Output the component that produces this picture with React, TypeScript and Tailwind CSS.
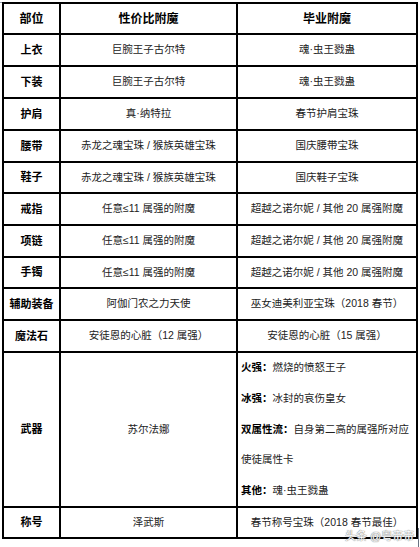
import type { ReactNode } from "react";

const font = { fontFamily: '"Liberation Sans", "Noto Sans CJK SC", sans-serif' };

type Row = { part: string; value: string; best: string; h: string };

const rows: Row[] = [
  { part: "上衣", value: "巨腕王子古尔特", best: "魂·虫王戮蛊", h: "h-[30px]" },
  { part: "下装", value: "巨腕王子古尔特", best: "魂·虫王戮蛊", h: "h-[30px]" },
  { part: "护肩", value: "真·纳特拉", best: "春节护肩宝珠", h: "h-[30px]" },
  { part: "腰带", value: "赤龙之魂宝珠 / 猴族英雄宝珠", best: "国庆腰带宝珠", h: "h-[30px]" },
  { part: "鞋子", value: "赤龙之魂宝珠 / 猴族英雄宝珠", best: "国庆鞋子宝珠", h: "h-[29px]" },
  { part: "戒指", value: "任意≤11 属强的附魔", best: "超越之诺尔妮 / 其他 20 属强附魔", h: "h-[30px]" },
  { part: "项链", value: "任意≤11 属强的附魔", best: "超越之诺尔妮 / 其他 20 属强附魔", h: "h-[30px]" },
  { part: "手镯", value: "任意≤11 属强的附魔", best: "超越之诺尔妮 / 其他 20 属强附魔", h: "h-[29px]" },
  { part: "辅助装备", value: "阿伽门农之力天使", best: "巫女迪美利亚宝珠（2018 春节）", h: "h-[30px]" },
  { part: "魔法石", value: "安徒恩的心脏（12 属强）", best: "安徒恩的心脏（15 属强）", h: "h-[30px]" },
];

function Cell({ children, className = "" }: { children: ReactNode; className?: string }) {
  return (
    <div className={`flex items-center justify-center bg-white whitespace-nowrap ${className}`}>
      {children}
    </div>
  );
}

function WeaponLine({ label, text }: { label?: string; text: string }) {
  return (
    <div className="h-[31px] flex items-center whitespace-nowrap">
      {label && <span className="font-bold text-black">{label}：</span>}
      <span>{text}</span>
    </div>
  );
}

export default function App() {
  return (
    <div className="relative w-[420px] h-[547px] bg-white" style={font}>
      <div className="absolute left-0 top-0 w-[2px] h-[1px] bg-gray-400" />
      <div className="ml-[2px] mt-[2px] w-[416px] bg-black p-[2px] grid grid-cols-[55px_175px_178px] gap-[2px] text-[10.5px] text-[#222]">
        <Cell className="h-[29px] bg-[#fff2cc] font-bold text-[12px] text-black">部位</Cell>
        <Cell className="h-[29px] bg-[#fff2cc] font-bold text-[12px] text-black">性价比附魔</Cell>
        <Cell className="h-[29px] bg-[#fff2cc] font-bold text-[12px] text-black">毕业附魔</Cell>

        {rows.map((r) => (
          <div key={r.part} className="contents">
            <Cell className={`${r.h} font-bold text-[11px] text-black`}>{r.part}</Cell>
            <Cell className={r.h}>{r.value}</Cell>
            <Cell className={r.h}>{r.best}</Cell>
          </div>
        ))}

        <Cell className="h-[153px] font-bold text-[11px] text-black">武器</Cell>
        <Cell className="h-[153px]">苏尔法娜</Cell>
        <div className="h-[153px] bg-white flex flex-col justify-center pl-[3px]">
          <WeaponLine label="火强" text="燃烧的愤怒王子" />
          <WeaponLine label="冰强" text="冰封的哀伤皇女" />
          <WeaponLine label="双属性流" text="自身第二高的属强所对应" />
          <WeaponLine text="使徒属性卡" />
          <WeaponLine label="其他" text="魂·虫王戮蛊" />
        </div>

        <Cell className="h-[29px] font-bold text-[11px] text-black">称号</Cell>
        <Cell className="h-[29px]">泽武斯</Cell>
        <Cell className="h-[29px]">春节称号宝珠（2018 春节最佳）</Cell>
      </div>

      <div
        className="absolute left-[345px] top-[527px] text-[11px] leading-[14px] text-white whitespace-nowrap"
        style={{ textShadow: "0 0 1px #777, 0 0 1px #777" }}
      >
        头条 @粤帝帝
      </div>
      <div className="absolute left-[418px] top-[526px] w-[1px] h-[19px] bg-gray-500" />
    </div>
  );
}
